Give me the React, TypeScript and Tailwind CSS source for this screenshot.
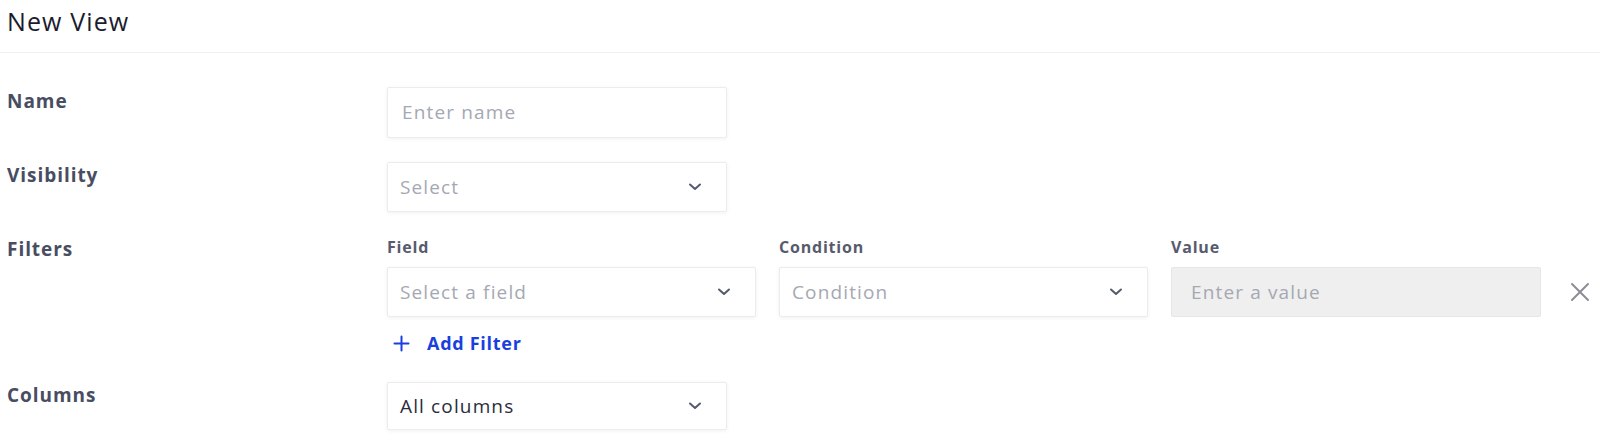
import React from "react";

const font = { fontFamily: "'Open Sans', 'Liberation Sans', sans-serif" };

const Chevron: React.FC = () => (
  <svg width="14" height="8" viewBox="0 0 14 8" fill="none" className="shrink-0">
    <path d="M2 1.5 L7 6 L12 1.5" stroke="#555a70" strokeWidth="2" strokeLinecap="round" strokeLinejoin="round" />
  </svg>
);

interface SelectBoxProps {
  text: string;
  placeholder?: boolean;
  className?: string;
}

const SelectBox: React.FC<SelectBoxProps> = ({ text, placeholder = true, className = "" }) => (
  <div
    className={`flex items-center justify-between bg-white border border-[#ececec] shadow-[0_1px_4px_rgba(0,0,0,0.06)] rounded-[2px] pl-3 pr-[24px] ${className}`}
  >
    <span className={`text-[19px] tracking-[0.06em] ${placeholder ? "text-[#a5a8b2]" : "text-[#2a2d3d]"}`}>{text}</span>
    <Chevron />
  </div>
);

const Label: React.FC<{ children: React.ReactNode; className?: string }> = ({ children, className = "" }) => (
  <div className={`w-[380px] shrink-0 text-[19px] leading-6 font-bold tracking-[0.05em] text-[#484d62] ${className}`}>
    {children}
  </div>
);

const SubLabel: React.FC<{ children: React.ReactNode }> = ({ children }) => (
  <div className="text-[16px] leading-5 font-bold tracking-[0.05em] text-[#575b6d]">{children}</div>
);

export default function App() {
  return (
    <div className="w-[1600px] h-[441px] bg-white overflow-hidden" style={font}>
      <div className="h-[53px] border-b border-[#f1f1f3] pt-[5px] px-[7px]">
        <h1 className="text-[25px] leading-[32px] tracking-[0.045em] text-[#1a1c2e] font-normal">New View</h1>
      </div>

      <div className="pl-[7px] pt-[34px]">
        {/* Name */}
        <div className="flex">
          <Label className="pt-[2px]">Name</Label>
          <div className="w-[340px] h-[51px] flex items-center bg-white border border-[#ececec] shadow-[0_1px_4px_rgba(0,0,0,0.06)] rounded-[2px] pl-[14px]">
            <span className="text-[19px] tracking-[0.06em] text-[#a5a8b2]">Enter name</span>
          </div>
        </div>

        {/* Visibility */}
        <div className="flex mt-[24px]">
          <Label className="pt-[1px]">Visibility</Label>
          <SelectBox text="Select" className="w-[340px] h-[50px]" />
        </div>

        {/* Filters */}
        <div className="flex mt-[25px]">
          <Label>Filters</Label>
          <div className="flex flex-col">
            <div className="flex items-end gap-[23px]">
              <div className="flex flex-col gap-[10px]">
                <SubLabel>Field</SubLabel>
                <SelectBox text="Select a field" className="w-[369px] h-[50px]" />
              </div>
              <div className="flex flex-col gap-[10px]">
                <SubLabel>Condition</SubLabel>
                <SelectBox text="Condition" className="w-[369px] h-[50px]" />
              </div>
              <div className="flex flex-col gap-[10px]">
                <SubLabel>Value</SubLabel>
                <div className="w-[370px] h-[50px] flex items-center bg-[#efefef] border border-[#e6e6e6] rounded-[2px] pl-[19px]">
                  <span className="text-[19px] tracking-[0.06em] text-[#a5a8b2]">Enter a value</span>
                </div>
              </div>
              <div className="h-[50px] flex items-center ml-[6px]">
                <svg width="20" height="20" viewBox="0 0 20 20" fill="none">
                  <path d="M2 2 L18 18 M18 2 L2 18" stroke="#8a8d96" strokeWidth="2" strokeLinecap="round" />
                </svg>
              </div>
            </div>
            <div className="flex items-center gap-[17px] mt-[14px] h-6 pl-[6px] text-[#1a3fe0]">
              <svg width="17" height="17" viewBox="0 0 17 17" fill="none">
                <path d="M8.5 1.5 V15.5 M1.5 8.5 H15.5" stroke="#1a3fe0" strokeWidth="2" strokeLinecap="round" />
              </svg>
              <span className="text-[18px] font-bold tracking-[0.04em]">Add Filter</span>
            </div>
          </div>
        </div>

        {/* Columns */}
        <div className="flex mt-[27px]">
          <Label className="pt-[1px]">Columns</Label>
          <SelectBox text="All columns" placeholder={false} className="w-[340px] h-[48px]" />
        </div>
      </div>
    </div>
  );
}
